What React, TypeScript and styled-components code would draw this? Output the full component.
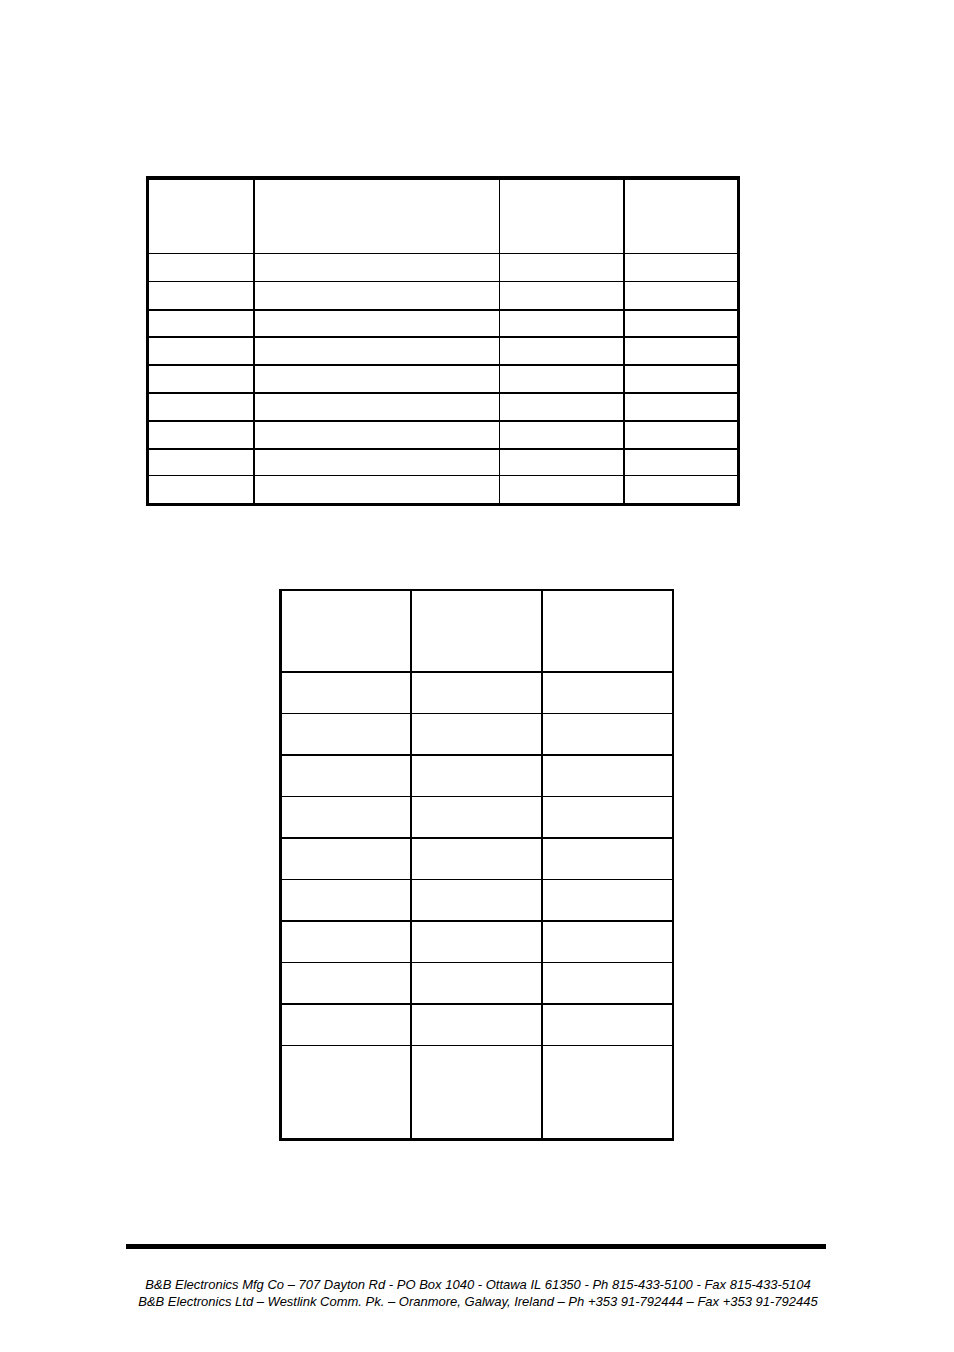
import React from 'react';
import styled, { createGlobalStyle } from 'styled-components';

const GlobalStyle = createGlobalStyle`
  body {
    margin: 0;
    background: #fff;
    font-family: 'Liberation Sans', Arial, sans-serif;
    color: #000;
  }
`;

interface Column {
  w: number;
  line: number;
}

interface RowSpec {
  h: number;
  line: number;
}

const Page = styled.div`
  width: 954px;
  min-height: 1352px;
  box-sizing: border-box;
  padding-top: 176px;
  display: flex;
  flex-direction: column;
`;

const Grid = styled.div<{ $border: string; $left: number; $width: number; $gap?: number }>`
  display: flex;
  flex-direction: column;
  width: ${(p) => p.$width}px;
  margin-left: ${(p) => p.$left}px;
  margin-top: ${(p) => p.$gap || 0}px;
  border-style: solid;
  border-color: #000;
  border-width: ${(p) => p.$border};
`;

const Row = styled.div<{ $h: number; $line: number }>`
  display: flex;
  box-sizing: border-box;
  height: ${(p) => p.$h}px;
  border-top: ${(p) => p.$line}px solid #000;
`;

const Cell = styled.div<{ $w: number; $line: number }>`
  flex: none;
  width: ${(p) => p.$w}px;
  border-left: ${(p) => p.$line}px solid #000;
`;

const Footer = styled.footer`
  margin-top: 103px;
  margin-left: 126px;
  width: 700px;
`;

const Rule = styled.div`
  height: 5px;
  background: #000;
`;

const Address = styled.div`
  margin-top: 27px;
  padding-left: 4px;
  text-align: center;
  font-family: 'Liberation Sans', Arial, sans-serif;
  font-style: italic;
  font-size: 13px;
  line-height: 17px;
  color: #000;
  white-space: nowrap;
`;

const table1Cols: Column[] = [
  { w: 104, line: 0 },
  { w: 244, line: 2 },
  { w: 123, line: 1 },
  { w: 112, line: 2 },
];

const table1Rows: RowSpec[] = [
  { h: 73, line: 0 },
  { h: 27.8, line: 1 },
  { h: 27.8, line: 1 },
  { h: 27.8, line: 2 },
  { h: 27.8, line: 2 },
  { h: 27.8, line: 2 },
  { h: 27.8, line: 2 },
  { h: 27.8, line: 2 },
  { h: 27.8, line: 2 },
  { h: 27.8, line: 1 },
];

const table2Cols: Column[] = [
  { w: 128, line: 0 },
  { w: 129, line: 2 },
  { w: 129, line: 2 },
];

const table2Rows: RowSpec[] = [
  { h: 80, line: 0 },
  { h: 42, line: 2 },
  { h: 41, line: 1 },
  { h: 42, line: 2 },
  { h: 41, line: 1 },
  { h: 42, line: 2 },
  { h: 41, line: 1 },
  { h: 42, line: 2 },
  { h: 41, line: 1 },
  { h: 42, line: 2 },
  { h: 93, line: 1 },
];

const EmptyTable = ({ rows, cols }: { rows: RowSpec[]; cols: Column[] }) => (
  <>
    {rows.map((r, i) => (
      <Row key={i} $h={r.h} $line={r.line}>
        {cols.map((c, j) => (
          <Cell key={j} $w={c.w} $line={c.line} />
        ))}
      </Row>
    ))}
  </>
);

export default function App() {
  return (
    <Page>
      <GlobalStyle />
      <Grid $border="4px 3px 3px 3px" $left={146} $width={588}>
        <EmptyTable rows={table1Rows} cols={table1Cols} />
      </Grid>
      <Grid $border="2px 2px 3px 3px" $left={279} $width={390} $gap={83}>
        <EmptyTable rows={table2Rows} cols={table2Cols} />
      </Grid>
      <Footer>
        <Rule />
        <Address>
          B&amp;B Electronics Mfg Co – 707 Dayton Rd - PO Box 1040 - Ottawa IL 61350 - Ph 815-433-5100 - Fax 815-433-5104
          <br />
          B&amp;B Electronics Ltd – Westlink Comm. Pk. – Oranmore, Galway, Ireland – Ph +353 91-792444 – Fax +353 91-792445
        </Address>
      </Footer>
    </Page>
  );
}
